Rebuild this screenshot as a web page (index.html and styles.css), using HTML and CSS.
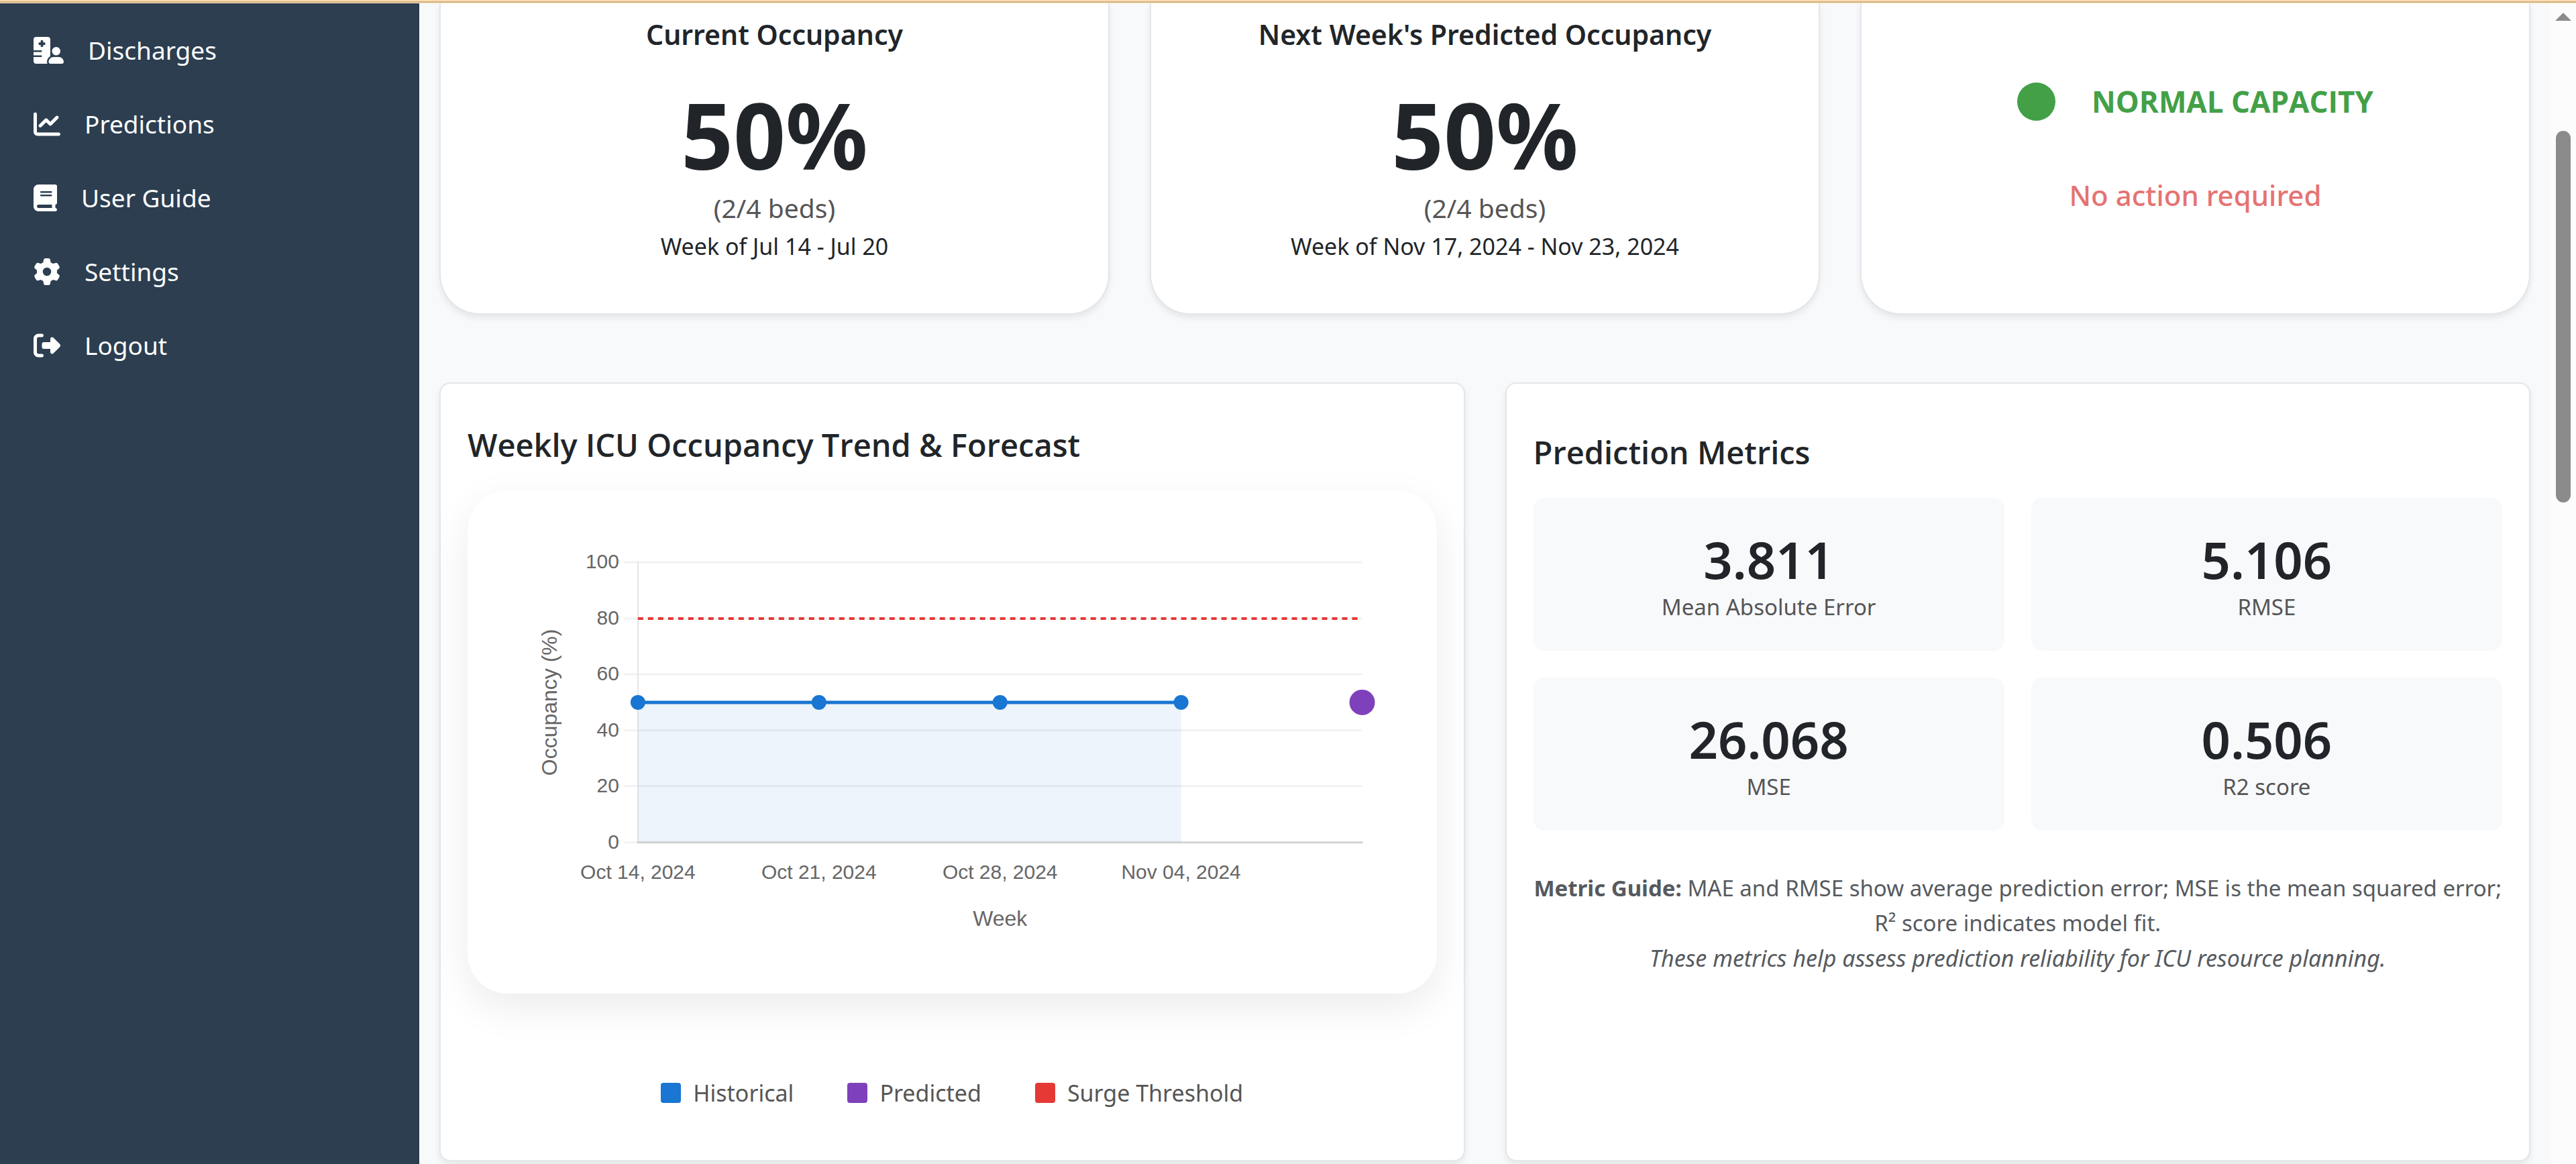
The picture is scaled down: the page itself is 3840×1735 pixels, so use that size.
FILE: index.html
```html
<!DOCTYPE html>
<html lang="en">
<head>
<meta charset="utf-8">
<meta name="viewport" content="width=device-width, initial-scale=1">
<title>ICU Occupancy Predictions</title>
<link rel="stylesheet" href="styles.css">
</head>
<body>
<div class="topline"></div>
<div class="app">
  <nav class="sidebar" aria-label="Main">
    <a class="nav-link" href="#discharges">
      <svg class="nav-icon nav-icon-wide" viewBox="0 0 576 512" aria-hidden="true"><path d="M48 0C21.500 0 0 21.500 0 48V256H144c8.800 0 16 7.200 16 16s-7.200 16-16 16H0v64H144c8.800 0 16 7.200 16 16s-7.200 16-16 16H0v80c0 26.500 21.500 48 48 48H265.900c-6.300-10.200-9.900-22.200-9.900-35.100c0-46.900 25.800-87.800 64-109.200V271.800 48c0-26.500-21.500-48-48-48H48zM152 64h16c8.800 0 16 7.200 16 16v24h24c8.800 0 16 7.200 16 16v16c0 8.800-7.200 16-16 16H184v24c0 8.800-7.200 16-16 16H152c-8.800 0-16-7.200-16-16V152H112c-8.800 0-16-7.200-16-16V120c0-8.800 7.200-16 16-16h24V80c0-8.800 7.200-16 16-16zM512 272a80 80 0 1 0-160 0 80 80 0 1 0 160 0zM288 477.100c0 19.300 15.600 34.900 34.900 34.900H541.100c19.300 0 34.900-15.600 34.900-34.900c0-51.400-41.700-93.100-93.100-93.100H381.100c-51.400 0-93.100 41.700-93.100 93.100z"/></svg>
      <span>Discharges</span></a>
    <a class="nav-link" href="#predictions">
      <svg class="nav-icon" viewBox="0 0 512 512" aria-hidden="true"><path d="M64 64c0-17.700-14.300-32-32-32S0 46.300 0 64V400c0 44.200 35.800 80 80 80H480c17.700 0 32-14.300 32-32s-14.300-32-32-32H80c-8.800 0-16-7.200-16-16V64zm406.600 86.600c12.500-12.500 12.500-32.800 0-45.300s-32.800-12.500-45.300 0L320 210.700l-57.400-57.400c-12.500-12.500-32.800-12.500-45.300 0l-112 112c-12.500 12.500-12.500 32.800 0 45.300s32.800 12.500 45.300 0L240 221.300l57.400 57.400c12.500 12.500 32.800 12.500 45.300 0l128-128z"/></svg>
      <span>Predictions</span></a>
    <a class="nav-link" href="#guide">
      <svg class="nav-icon nav-icon-narrow" viewBox="0 0 448 512" aria-hidden="true"><path d="M96 0C43 0 0 43 0 96V416c0 53 43 96 96 96H384h32c17.700 0 32-14.300 32-32s-14.300-32-32-32V384c17.700 0 32-14.300 32-32V32c0-17.700-14.300-32-32-32H384 96zm0 384H352v64H96c-17.700 0-32-14.300-32-32s14.300-32 32-32zm32-240c0-8.800 7.200-16 16-16H336c8.800 0 16 7.200 16 16s-7.200 16-16 16H144c-8.800 0-16-7.200-16-16zm16 48H336c8.800 0 16 7.200 16 16s-7.200 16-16 16H144c-8.800 0-16-7.200-16-16s7.200-16 16-16z"/></svg>
      <span>User Guide</span></a>
    <a class="nav-link" href="#settings">
      <svg class="nav-icon" viewBox="0 0 512 512" aria-hidden="true"><path d="M495.900 166.600c3.200 8.700 .5 18.400-6.400 24.600l-43.300 39.400c1.100 8.300 1.700 16.800 1.700 25.400s-.6 17.100-1.700 25.400l43.300 39.400c6.900 6.200 9.600 15.900 6.400 24.600c-4.400 11.900-9.700 23.300-15.800 34.300l-4.700 8.100c-6.600 11-14 21.400-22.100 31.200c-5.900 7.200-15.700 9.600-24.500 6.800l-55.700-17.700c-13.400 10.300-28.200 18.900-44 25.400l-12.500 57.100c-2 9.100-9 16.300-18.200 17.800c-13.800 2.300-28 3.500-42.500 3.500s-28.700-1.200-42.500-3.500c-9.200-1.500-16.200-8.700-18.200-17.800l-12.500-57.100c-15.800-6.500-30.600-15.100-44-25.400L83.100 425.900c-8.800 2.800-18.600 .3-24.500-6.800c-8.100-9.800-15.500-20.200-22.100-31.200l-4.700-8.100c-6.100-11-11.400-22.400-15.800-34.300c-3.200-8.700-.5-18.400 6.400-24.600l43.300-39.400C64.600 273.100 64 264.600 64 256s.6-17.100 1.700-25.400L22.400 191.200c-6.900-6.200-9.600-15.900-6.400-24.600c4.400-11.900 9.700-23.300 15.800-34.300l4.700-8.100c6.600-11 14-21.400 22.100-31.200c5.900-7.200 15.700-9.600 24.500-6.800l55.700 17.700c13.400-10.300 28.200-18.900 44-25.400l12.500-57.100c2-9.100 9-16.300 18.200-17.800C227.300 1.200 241.500 0 256 0s28.700 1.200 42.500 3.500c9.200 1.500 16.200 8.700 18.200 17.800l12.500 57.100c15.800 6.500 30.600 15.100 44 25.400l55.700-17.700c8.800-2.800 18.600-.3 24.500 6.800c8.100 9.800 15.500 20.200 22.100 31.200l4.700 8.100c6.100 11 11.400 22.400 15.800 34.300zM256 336a80 80 0 1 0 0-160 80 80 0 1 0 0 160z"/></svg>
      <span>Settings</span></a>
    <a class="nav-link" href="#logout">
      <svg class="nav-icon" viewBox="0 0 512 512" aria-hidden="true"><path d="M377.900 105.900L500.700 228.700c7.200 7.200 11.300 17.100 11.300 27.300s-4.100 20.100-11.300 27.300L377.900 406.100c-6.400 6.400-15 9.900-24 9.900c-18.700 0-33.900-15.200-33.900-33.900l0-62.100-128 0c-17.700 0-32-14.300-32-32l0-64c0-17.700 14.300-32 32-32l128 0 0-62.100c0-18.700 15.200-33.900 33.900-33.900c9 0 17.600 3.600 24 9.900zM160 96L96 96c-17.700 0-32 14.300-32 32l0 256c0 17.700 14.300 32 32 32l64 0c17.700 0 32 14.300 32 32s-14.300 32-32 32l-64 0c-53 0-96-43-96-96L0 128C0 75 43 32 96 32l64 0c17.700 0 32 14.300 32 32s-14.300 32-32 32z"/></svg>
      <span>Logout</span></a>
  </nav>

  <main class="content">
    <section class="summary">
      <article class="card">
        <h2 class="card-title">Current Occupancy</h2>
        <p class="card-value">50%</p>
        <p class="card-beds">(2/4 beds)</p>
        <p class="card-week">Week of Jul 14 - Jul 20</p>
      </article>
      <article class="card">
        <h2 class="card-title">Next Week's Predicted Occupancy</h2>
        <p class="card-value">50%</p>
        <p class="card-beds">(2/4 beds)</p>
        <p class="card-week">Week of Nov 17, 2024 - Nov 23, 2024</p>
      </article>
      <article class="card card-status">
        <p class="status"><span class="status-dot"></span><span>NORMAL CAPACITY</span></p>
        <p class="status-action">No action required</p>
      </article>
    </section>

    <section class="panels">
      <article class="panel">
        <h2 class="panel-title">Weekly ICU Occupancy Trend &amp; Forecast</h2>
        <div class="chart-card">
          <svg class="chart" viewBox="0 0 1445 750" role="img" aria-label="Weekly ICU occupancy in percent">
            <path class="grid" d="M234 107H1334M234 191H1334M234 274H1334M234 358H1334M234 441H1334M234 525H1334"/>
            <path class="axis-y" d="M254 106V526"/>
            <path class="axis-x" d="M253 525H1335"/>
            <path class="area" d="M254 316H1064V525H254Z"/>
            <path class="threshold" d="M254 191H1334"/>
            <path class="line" d="M254 316H1064"/>
            <g class="points">
              <circle cx="254" cy="316" r="11"/><circle cx="524" cy="316" r="11"/><circle cx="794" cy="316" r="11"/><circle cx="1064" cy="316" r="11"/>
            </g>
            <circle class="forecast" cx="1334" cy="316" r="19"/>
            <g class="ticks ticks-y">
              <text x="226" y="116">100</text><text x="226" y="200">80</text><text x="226" y="283">60</text><text x="226" y="367">40</text><text x="226" y="450">20</text><text x="226" y="534">0</text>
            </g>
            <g class="ticks ticks-x">
              <text x="254" y="579">Oct 14, 2024</text><text x="524" y="579">Oct 21, 2024</text><text x="794" y="579">Oct 28, 2024</text><text x="1064" y="579">Nov 04, 2024</text>
            </g>
            <text class="axis-title" x="794" y="649">Week</text>
            <text class="axis-title" transform="translate(133 316) rotate(-90)">Occupancy (%)</text>
          </svg>
        </div>
        <ul class="legend">
          <li class="legend-item"><span class="swatch swatch-historical"></span>Historical</li>
          <li class="legend-item"><span class="swatch swatch-predicted"></span>Predicted</li>
          <li class="legend-item"><span class="swatch swatch-threshold"></span>Surge Threshold</li>
        </ul>
      </article>

      <article class="panel panel-metrics">
        <h2 class="panel-title">Prediction Metrics</h2>
        <div class="metrics">
          <div class="metric"><p class="metric-value">3.811</p><p class="metric-label">Mean Absolute Error</p></div>
          <div class="metric"><p class="metric-value">5.106</p><p class="metric-label">RMSE</p></div>
          <div class="metric"><p class="metric-value">26.068</p><p class="metric-label">MSE</p></div>
          <div class="metric"><p class="metric-value">0.506</p><p class="metric-label">R2 score</p></div>
        </div>
        <p class="guide"><strong>Metric Guide:</strong> MAE and RMSE show average prediction error; MSE is the mean squared error; R² score indicates model fit.<br><em class="guide-note">These metrics help assess prediction reliability for ICU resource planning.</em></p>
      </article>
    </section>
  </main>

  <div class="scrollbar" aria-hidden="true">
    <svg class="scroll-arrow" viewBox="0 0 24 12"><path d="M12 0L24 12H0Z"/></svg>
    <div class="scroll-thumb"></div>
  </div>
</div>
</body>
</html>
```
FILE: styles.css
```css
* {
  box-sizing: border-box;
  margin: 0;
  padding: 0;
}

body {
  display: flex;
  flex-direction: column;
  height: 100vh;
  overflow: hidden;
  background: #f8f9fb;
  color: #212529;
  font-family: "Noto Sans", "Open Sans", sans-serif;
}

.topline {
  flex: none;
  height: 5px;
  border-top: 2px solid #ffdcb0;
  border-bottom: 1px solid #ffe6c8;
  background: #cfb083;
}

.app {
  display: flex;
  flex: 1;
  min-height: 0;
}

/* Sidebar */
.sidebar {
  flex: none;
  width: 625px;
  padding-top: 15px;
  background: #2c3e50;
}

.nav-link {
  display: flex;
  align-items: center;
  gap: 36px;
  height: 110px;
  padding: 0 50px;
  color: #fff;
  font-size: 37px;
  line-height: 50px;
  text-decoration: none;
}

.nav-icon {
  width: 40px;
  height: 40px;
  fill: currentColor;
}

.nav-icon-wide {
  width: 45px;
}

.nav-icon-narrow {
  width: 35px;
}

/* Content */
.content {
  flex: 1;
  min-width: 0;
  padding: 0 30px;
  overflow: hidden;
}

.summary {
  display: grid;
  grid-template-columns: repeat(3, 1fr);
  gap: 60px;
}

.card {
  padding: 16px 40px 72px;
  border: 2px solid #e3e6ea;
  border-top: 0;
  border-radius: 0 0 60px 60px;
  background: #fff;
  box-shadow: 0 5px 10px rgba(0, 0, 0, 0.075);
  text-align: center;
}

.card-title {
  font-size: 41px;
  font-weight: 600;
  line-height: 60px;
}

.card-value {
  margin-top: 40px;
  font-size: 136px;
  font-weight: 700;
  line-height: 160px;
}

.card-beds {
  color: #555;
  font-size: 39px;
  line-height: 58px;
}

.card-week {
  font-size: 34px;
  line-height: 56px;
}

.card-status {
  padding-top: 112px;
}

.status {
  display: flex;
  align-items: center;
  justify-content: center;
  gap: 54px;
  color: #43a047;
  font-family: "Open Sans", sans-serif;
  font-size: 44px;
  font-weight: 700;
  line-height: 68px;
}

.status-dot {
  width: 57px;
  height: 57px;
  border-radius: 50%;
  background: #43a047;
}

.status-action {
  margin-top: 72px;
  color: #e57373;
  font-size: 42px;
  font-weight: 500;
  line-height: 68px;
}

/* Panels */
.panels {
  display: grid;
  grid-template-columns: repeat(2, 1fr);
  gap: 60px;
  margin-top: 101px;
}

.panel {
  padding: 61px 40px 72px;
  border: 2px solid #e3e6ea;
  border-radius: 16px;
  background: #fff;
  box-shadow: 0 5px 10px rgba(0, 0, 0, 0.075);
}

.panel-metrics {
  padding-top: 72px;
}

.panel-title {
  margin-bottom: 38px;
  font-family: "Open Sans", sans-serif;
  font-size: 47px;
  font-weight: 600;
  line-height: 60px;
}

.chart-card {
  border-radius: 60px;
  background: #fff;
  box-shadow: 0 20px 60px rgba(0, 0, 0, 0.08);
}

.chart {
  display: block;
  width: 100%;
  font-family: "Liberation Sans", Arial, sans-serif;
}

.grid {
  fill: none;
  stroke: #f2f2f2;
  stroke-width: 3;
}

.axis-y {
  stroke: #e5e5e5;
  stroke-width: 2;
}

.axis-x {
  stroke: #d5d5d5;
  stroke-width: 3;
}

.area {
  fill: rgba(25, 118, 210, 0.08);
}

.threshold {
  stroke: #e53935;
  stroke-width: 4;
  stroke-dasharray: 8 7;
}

.line {
  stroke: #1976d2;
  stroke-width: 5;
}

.points {
  fill: #1976d2;
}

.forecast {
  fill: #7e41bb;
}

.ticks {
  fill: #666;
  font-size: 30px;
}

.ticks-y {
  text-anchor: end;
}

.ticks-x {
  text-anchor: middle;
}

.axis-title {
  fill: #666;
  font-size: 32px;
  text-anchor: middle;
}

.legend {
  display: flex;
  justify-content: center;
  gap: 80px;
  margin-top: 120px;
  list-style: none;
}

.legend-item {
  display: flex;
  align-items: center;
  gap: 18px;
  color: #555;
  font-size: 34px;
  line-height: 56px;
}

.swatch {
  width: 30px;
  height: 30px;
  border-radius: 4px;
}

.swatch-historical {
  background: #1976d2;
}

.swatch-predicted {
  background: #7e41bb;
}

.swatch-threshold {
  background: #e53935;
}

/* Metrics */
.metrics {
  display: grid;
  grid-template-columns: repeat(2, 1fr);
  gap: 40px;
}

.metric {
  padding: 46px 0 40px;
  border-radius: 16px;
  background: #f8f9fb;
  text-align: center;
}

.metric-value {
  font-size: 76px;
  font-weight: 600;
  line-height: 92px;
}

.metric-label {
  color: #555;
  font-size: 33px;
  line-height: 50px;
}

.guide {
  margin-top: 60px;
  color: #565a5e;
  font-size: 33px;
  line-height: 52px;
  text-align: center;
}

.guide-note {
  font-size: 34px;
}

/* Scrollbar */
.scrollbar {
  display: flex;
  flex: none;
  flex-direction: column;
  align-items: center;
  width: 38px;
  padding-top: 14px;
  background: #fcfcfc;
}

.scroll-arrow {
  width: 24px;
  height: 12px;
  fill: #8b8b8b;
}

.scroll-thumb {
  width: 22px;
  height: 554px;
  margin-top: 164px;
  border-radius: 11px;
  background: #8b8b8b;
}
```
